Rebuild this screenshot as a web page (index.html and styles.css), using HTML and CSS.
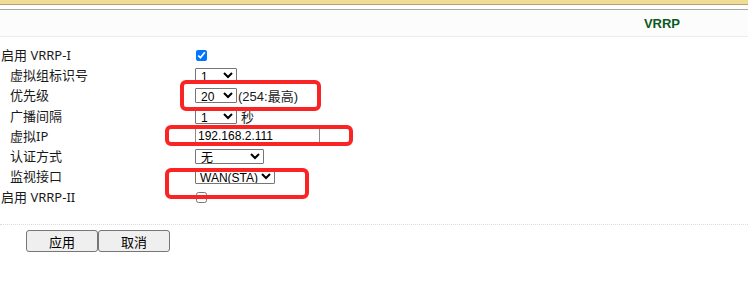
FILE: index.html
```html
<!DOCTYPE html>
<html lang="zh-CN">
<head>
  <meta charset="UTF-8">
  <title>VRRP</title>
  <link rel="stylesheet" href="styles.css">
</head>
<body>
  <div class="topband"></div>
  <div class="header">
    <span class="title">VRRP</span>
  </div>

  <!-- VRRP 设置 -->
  <form class="form">
    <div class="row">
      <label class="label">启用 VRRP-I</label>
      <input type="checkbox" class="check" checked>
    </div>
    <div class="row">
      <label class="label sub">虚拟组标识号</label>
      <select class="sel sel-s"><option>1</option></select>
    </div>
    <div class="row">
      <label class="label sub">优先级</label>
      <select class="sel sel-s"><option>20</option></select>
      <span class="hint">(254:最高)</span>
    </div>
    <div class="row">
      <label class="label sub">广播间隔</label>
      <select class="sel sel-s"><option>1</option></select>
      <span class="hint unit">秒</span>
    </div>
    <div class="row">
      <label class="label sub">虚拟IP</label>
      <input type="text" class="ip" value="192.168.2.111">
    </div>
    <div class="row">
      <label class="label sub">认证方式</label>
      <select class="sel sel-m"><option>无</option></select>
    </div>
    <div class="row">
      <label class="label sub">监视接口</label>
      <select class="sel sel-l"><option>WAN(STA)</option></select>
    </div>
    <div class="row">
      <label class="label">启用 VRRP-II</label>
      <input type="checkbox" class="check">
    </div>

    <div class="actions">
      <button type="button" class="btn">应用</button>
      <button type="button" class="btn">取消</button>
    </div>
  </form>

  <!-- 标注框 -->
  <div class="mark mark1"></div>
  <div class="mark mark2"></div>
  <div class="mark mark3"></div>
</body>
</html>
```

FILE: styles.css
```css
body {
  margin: 0;
  background: #fff;
  color: #1a1a1a;
  font-family: "Noto Sans", "Noto Sans CJK SC", sans-serif;
  font-size: 13px;
  position: relative;
  width: 748px;
  height: 294px;
  overflow: hidden;
}

.topband {
  height: 4px;
  background: #f0dc96;
  border-bottom: 1px solid #b5a566;
  margin-bottom: 4px;
}

.header {
  height: 26px;
  background: #fcfcfc;
  border-top: 1px solid #a8a8a8;
  border-bottom: 1px solid #ececec;
  display: flex;
  align-items: center;
  justify-content: flex-end;
  padding-right: 68px;
}

.title {
  font-family: "Liberation Sans", Arial, sans-serif;
  font-weight: bold;
  font-size: 13px;
  color: #0b5a1e;
  margin-top: 1px;
}

.form {
  margin: 0;
  padding-top: 8px;
}

.row {
  height: 20.3px;
  display: flex;
  align-items: center;
}

.label {
  width: 195px;
  padding-left: 1px;
  box-sizing: border-box;
  line-height: 1;
  flex-shrink: 0;
}

.label.sub { padding-left: 10px; }

.check {
  width: 11px;
  height: 11px;
  margin: 0 0 0 1px;
}

.sel {
  height: 15px;
  font-family: "Liberation Sans", "Noto Sans CJK SC", sans-serif;
  font-size: 12px;
  padding: 0 0 0 1px;
  margin: 0;
  border: 1px solid #767676;
  border-radius: 1px;
  background: #fff;
  color: #000;
  line-height: 13px;
}

.sel-s { width: 42px; }
.sel-m { width: 69px; }
.sel-l { width: 80px; padding-left: 0; }

.hint {
  margin-left: 1px;
  color: #1a1a1a;
  font-family: "Liberation Sans", "Noto Sans CJK SC", sans-serif;
}

.hint.unit { margin-left: 4px; }

.ip {
  width: 125px;
  height: 16px;
  box-sizing: border-box;
  margin: 0;
  padding: 0 2px;
  border: none;
  border-left: 1px solid #8a8a8a;
  border-right: 1px solid #8a8a8a;
  font-family: "Liberation Sans", sans-serif;
  font-size: 12px;
  color: #000;
  background: #fff;
}

.actions {
  margin-top: 17px;
  border-top: 1px dotted #dcdcdc;
  padding: 5px 0 0 26px;
  display: flex;
}

.btn {
  width: 72px;
  height: 22px;
  margin: 0;
  padding: 0;
  background: #efefef;
  border: 1px solid #767676;
  border-radius: 3px;
  font-family: "Noto Sans CJK SC", sans-serif;
  font-size: 13px;
  color: #000;
}

.mark {
  position: absolute;
  border: 4px solid #fa2424;
  border-radius: 6px;
  box-sizing: border-box;
}

.mark1 { left: 180px; top: 80px; width: 141px; height: 31px; }
.mark2 { left: 165px; top: 125px; width: 188px; height: 21px; }
.mark3 { left: 165px; top: 168px; width: 144px; height: 31px; }
```
